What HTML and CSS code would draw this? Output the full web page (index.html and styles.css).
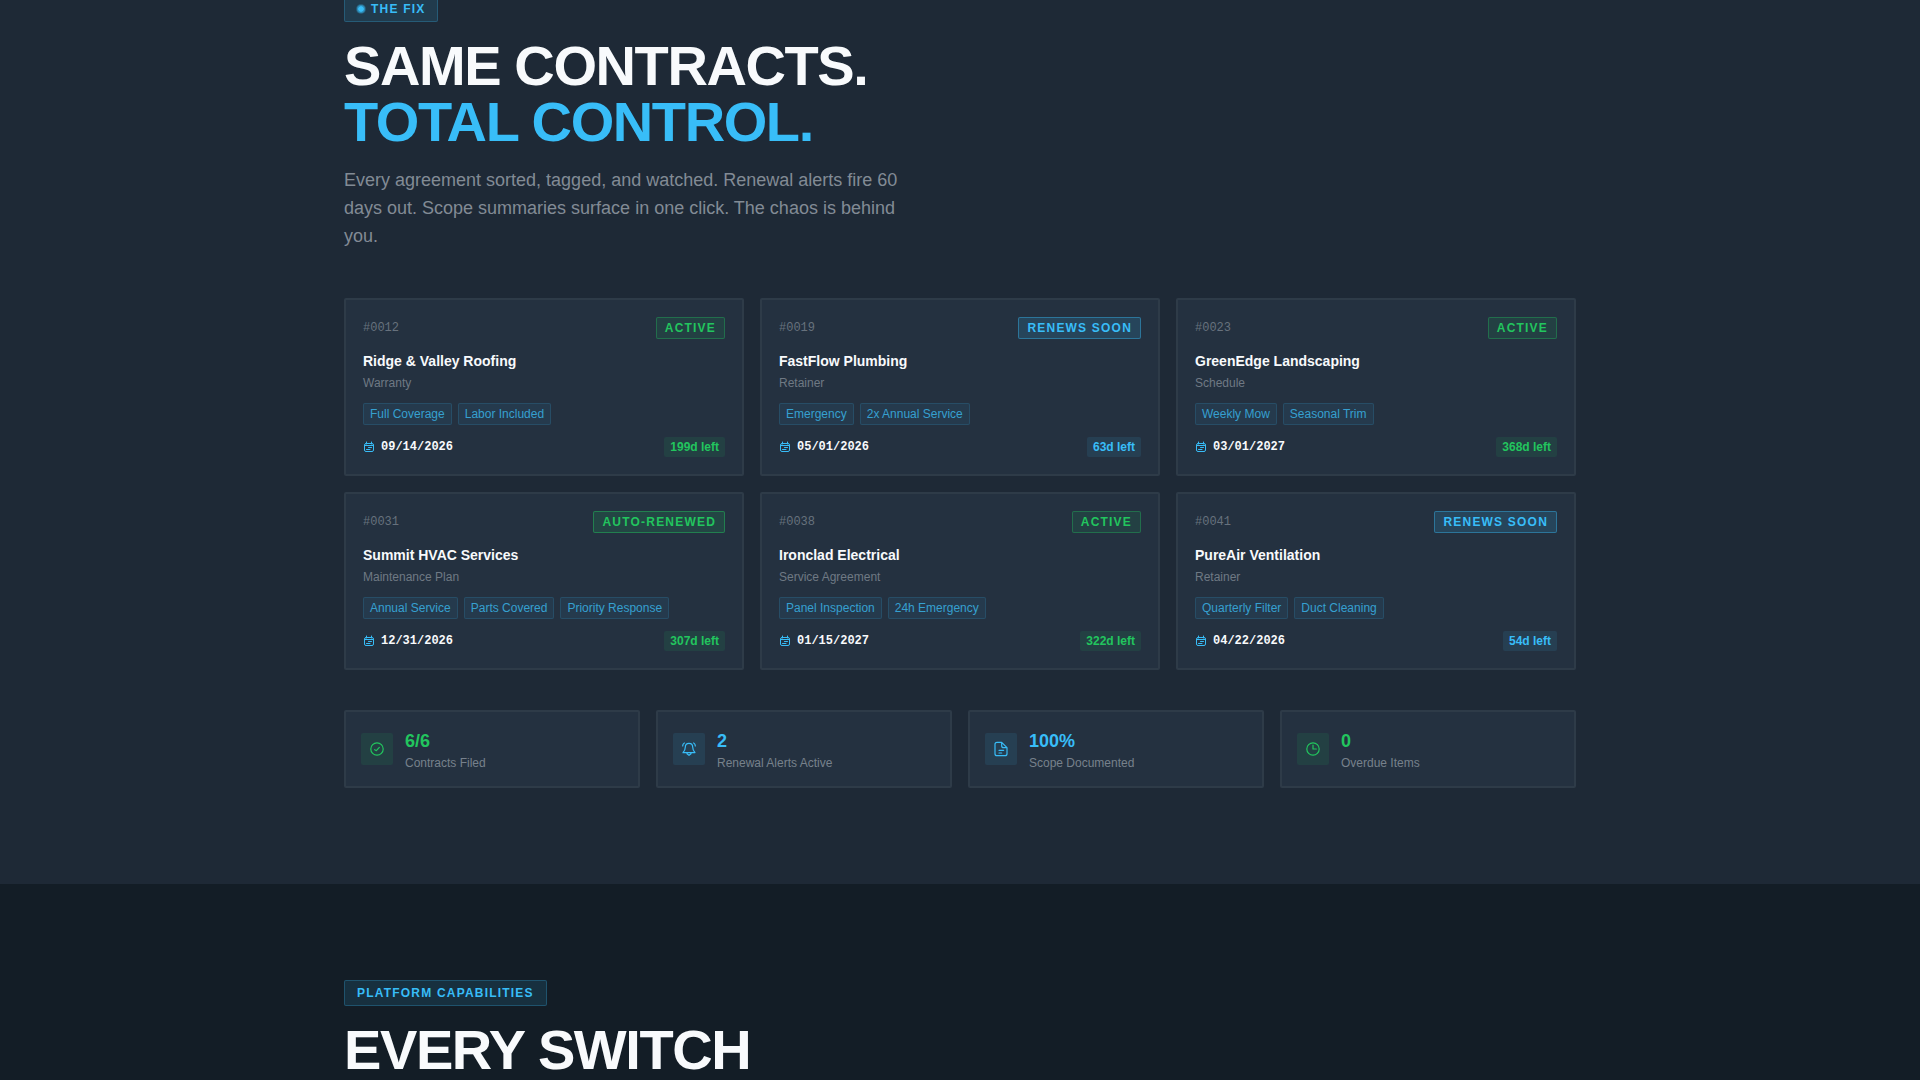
FILE: index.html
```html
<!DOCTYPE html>
<html lang="en">
<head>
    <meta charset="utf-8" />
    <meta name="viewport" content="width=device-width, initial-scale=1" />
    <title>Contract Control</title>
    <link rel="stylesheet" href="styles.css">
</head>
<body>

  <!-- Icons -->
  <svg class="sprite" aria-hidden="true">
    <symbol id="calendar" viewBox="0 0 24 24">
      <rect x="3" y="5" width="18" height="16" rx="3" />
      <path d="M3 9h18M7 2v4M17 2v4M11 13h6M7 17h7" />
    </symbol>
    <symbol id="check" viewBox="0 0 24 24">
      <circle cx="12" cy="12" r="9.3" />
      <path d="M8.500 13l2.500 1.500 4.500-5" />
    </symbol>
    <symbol id="bell" viewBox="0 0 24 24">
      <path d="M6.500 9c0-4 2-5.500 5.500-5.500s5.500 1.500 5.500 5.500c0 4 .5 5 3.500 8.500H3c3-3.500 3.500-4.500 3.500-8.500zM9 19l3 2.500 3-2.500M5 3C3 4 2.500 5 2.500 7.500M19 3c2 1 2.500 2 2.500 4.500" />
    </symbol>
    <symbol id="file" viewBox="0 0 24 24">
      <path d="M13 2H6a3 3 0 0 0-3 3v14a3 3 0 0 0 3 3h12a3 3 0 0 0 3-3v-9zM13 2v5a3 3 0 0 0 3 3h5M9 14h7M9 18h4" />
    </symbol>
    <symbol id="clock" viewBox="0 0 24 24">
      <circle cx="12" cy="12" r="9.3" />
      <path d="M12 6v6h5" />
    </symbol>
  </svg>

  <section class="fix">
    <div class="container">
      <span class="label label-dot">The Fix</span>
      <h2>Same Contracts.<br><span class="accent">Total Control.</span></h2>
      <p class="intro">Every agreement sorted, tagged, and watched. Renewal alerts fire 60 days out. Scope summaries surface in one click. The chaos is behind you.</p>

      <div class="contracts">
        <article class="card">
          <div class="row"><span class="number">#0012</span><span class="status green">Active</span></div>
          <h3>Ridge &amp; Valley Roofing</h3>
          <p class="type">Warranty</p>
          <div class="tags"><span>Full Coverage</span><span>Labor Included</span></div>
          <div class="row"><span class="date"><svg><use href="#calendar" /></svg>09/14/2026</span><span class="days green">199d left</span></div>
        </article>
        <article class="card">
          <div class="row"><span class="number">#0019</span><span class="status blue">Renews Soon</span></div>
          <h3>FastFlow Plumbing</h3>
          <p class="type">Retainer</p>
          <div class="tags"><span>Emergency</span><span>2x Annual Service</span></div>
          <div class="row"><span class="date"><svg><use href="#calendar" /></svg>05/01/2026</span><span class="days blue">63d left</span></div>
        </article>
        <article class="card">
          <div class="row"><span class="number">#0023</span><span class="status green">Active</span></div>
          <h3>GreenEdge Landscaping</h3>
          <p class="type">Schedule</p>
          <div class="tags"><span>Weekly Mow</span><span>Seasonal Trim</span></div>
          <div class="row"><span class="date"><svg><use href="#calendar" /></svg>03/01/2027</span><span class="days green">368d left</span></div>
        </article>
        <article class="card">
          <div class="row"><span class="number">#0031</span><span class="status green strong">Auto-Renewed</span></div>
          <h3>Summit HVAC Services</h3>
          <p class="type">Maintenance Plan</p>
          <div class="tags"><span>Annual Service</span><span>Parts Covered</span><span>Priority Response</span></div>
          <div class="row"><span class="date"><svg><use href="#calendar" /></svg>12/31/2026</span><span class="days green">307d left</span></div>
        </article>
        <article class="card">
          <div class="row"><span class="number">#0038</span><span class="status green">Active</span></div>
          <h3>Ironclad Electrical</h3>
          <p class="type">Service Agreement</p>
          <div class="tags"><span>Panel Inspection</span><span>24h Emergency</span></div>
          <div class="row"><span class="date"><svg><use href="#calendar" /></svg>01/15/2027</span><span class="days green">322d left</span></div>
        </article>
        <article class="card">
          <div class="row"><span class="number">#0041</span><span class="status blue">Renews Soon</span></div>
          <h3>PureAir Ventilation</h3>
          <p class="type">Retainer</p>
          <div class="tags"><span>Quarterly Filter</span><span>Duct Cleaning</span></div>
          <div class="row"><span class="date"><svg><use href="#calendar" /></svg>04/22/2026</span><span class="days blue">54d left</span></div>
        </article>
      </div>

      <div class="stats">
        <div class="stat">
          <span class="stat-icon green"><svg><use href="#check" /></svg></span>
          <div><strong class="green-text">6/6</strong><p>Contracts Filed</p></div>
        </div>
        <div class="stat">
          <span class="stat-icon blue"><svg><use href="#bell" /></svg></span>
          <div><strong class="blue-text">2</strong><p>Renewal Alerts Active</p></div>
        </div>
        <div class="stat">
          <span class="stat-icon blue"><svg><use href="#file" /></svg></span>
          <div><strong class="blue-text">100%</strong><p>Scope Documented</p></div>
        </div>
        <div class="stat">
          <span class="stat-icon green"><svg><use href="#clock" /></svg></span>
          <div><strong class="green-text">0</strong><p>Overdue Items</p></div>
        </div>
      </div>
    </div>
  </section>

  <section class="platform">
    <div class="container">
      <span class="label">Platform Capabilities</span>
      <h2>Every Switch</h2>
    </div>
  </section>

</body>
</html>
```
FILE: styles.css
```css
*, *::before { box-sizing: border-box; }
body {
    font-family: "Liberation Sans", Arial, sans-serif;
    background-color: #131d26;
    color: #f8fafc;
    margin: 0;
    height: 100vh;
    overflow: hidden;
}
h2, h3, p { margin: 0; }
.sprite { position: absolute; width: 0; height: 0; }
svg {
    fill: none; stroke: currentColor; stroke-width: 2;
    stroke-linecap: round; stroke-linejoin: round;
}
section { padding: 96px 0; }
/* page sits scrolled just past the top padding */
.fix { background-color: #1e2936; margin-top: -100px; }
.platform { background-color: #131d26; padding-bottom: 0; }
.container { max-width: 1280px; margin: 0 auto; padding: 0 24px; }

.label {
    display: flex; align-items: center; gap: 6px;
    width: fit-content;
    padding: 4px 12px;
    border: 1px solid rgba(56, 189, 248, 0.25); border-radius: 2px;
    background-color: rgba(56, 189, 248, 0.12);
    color: #38bdf8;
    font-size: 12px; font-weight: bold; line-height: 16px;
    letter-spacing: 0.1em; text-transform: uppercase;
}
.label-dot::before {
    content: ""; width: 8px; height: 8px; border-radius: 50%;
    border: 1px solid rgba(56, 189, 248, 0.5);
    background-color: #38bdf8; background-clip: padding-box;
    box-shadow: 0 0 0 1px rgba(56, 189, 248, 0.25);
}
h2 {
    margin-top: 16px;
    font-size: 56px; line-height: 56px;
    letter-spacing: -0.025em; text-transform: uppercase;
}
.accent { color: #38bdf8; }
.intro {
    max-width: 560px; margin-top: 16px;
    color: #828b95; font-size: 18px; line-height: 28px;
}

/* Contracts */
.contracts {
    display: grid; grid-template-columns: repeat(3, 1fr);
    gap: 16px; margin-top: 48px;
}
.card, .stat {
    background-color: #243140;
    border: 2px solid #2e3b48; border-radius: 2px;
}
.card { padding: 17px; }
.row { display: flex; justify-content: space-between; align-items: center; }
.number {
    color: #67717d;
    font-family: "Liberation Mono", monospace; font-size: 12px;
}
.green { color: #22c55e; background-color: rgba(34, 197, 94, 0.1); border-color: rgba(34, 197, 94, 0.35); }
.blue { color: #38bdf8; background-color: rgba(56, 189, 248, 0.1); border-color: rgba(56, 189, 248, 0.4); }
.green-text { color: #22c55e; }
.blue-text { color: #38bdf8; }
.status {
    padding: 1px 8px;
    border-width: 1px; border-style: solid; border-radius: 2px;
    font-size: 12px; font-weight: bold; line-height: 18px;
    letter-spacing: 0.1em; text-transform: uppercase;
}
.status.blue { background-color: rgba(56, 189, 248, 0.15); }
.strong { background-color: rgba(34, 197, 94, 0.15); border-color: rgba(34, 197, 94, 0.45); }
h3 { margin-top: 12px; font-size: 14px; line-height: 20px; }
.type { margin-top: 2px; color: #6f7984; font-size: 12px; line-height: 20px; }
.tags { display: flex; gap: 6px; margin: 10px 0 12px; }
.tags span {
    padding: 1px 6px;
    border: 1px solid rgba(56, 189, 248, 0.15); border-radius: 2px;
    background-color: rgba(56, 189, 248, 0.07);
    color: #36a0d0; font-size: 12px; line-height: 18px;
}
.date {
    display: flex; align-items: center; gap: 6px;
    font-family: "Liberation Mono", monospace; font-size: 12px; font-weight: bold;
}
.date svg { width: 12px; height: 12px; color: #38bdf8; }
.days {
    padding: 1px 6px; border-radius: 2px;
    font-size: 12px; font-weight: bold; line-height: 18px;
}

/* Totals */
.stats {
    display: grid; grid-template-columns: repeat(4, 1fr);
    gap: 16px; margin-top: 40px;
}
.stat { display: flex; align-items: center; gap: 12px; padding: 15px; }
.stat-icon {
    display: flex; align-items: center; justify-content: center;
    width: 32px; height: 32px; border-radius: 2px;
}
.stat-icon svg { width: 16px; height: 16px; stroke-width: 1.8; }
.stat strong { display: block; font-size: 18px; line-height: 28px; }
.stat p { color: #77818c; font-size: 12px; line-height: 16px; }
```
